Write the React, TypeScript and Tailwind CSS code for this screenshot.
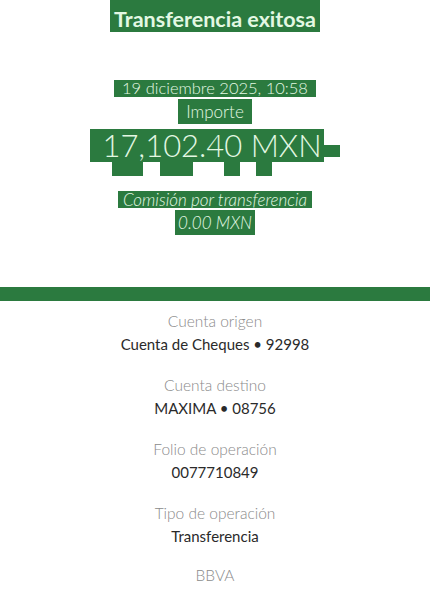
import React from "react";

const hl = "bg-[#2b7a3f] text-[#e3f8e3]";

const details = [
  { label: "Cuenta origen", value: "Cuenta de Cheques • 92998" },
  { label: "Cuenta destino", value: "MAXIMA • 08756" },
  { label: "Folio de operación", value: "0077710849" },
  { label: "Tipo de operación", value: "Transferencia" },
];

export default function App() {
  return (
    <div className="w-[430px] h-[597px] overflow-hidden bg-white font-['Lato','Noto_Sans',sans-serif]">
      {/* header */}
      <div className="flex flex-col items-center text-center">
        <span className={`${hl} px-[4px] pt-[8px] pb-[1px] text-[21.5px] font-bold leading-[23px]`}>
          Transferencia exitosa
        </span>

        <span className={`${hl} mt-[48px] px-[8px] text-[16.5px] font-light leading-[17px]`}>
          19 diciembre 2025, 10:58
        </span>
        <span className={`${hl} mt-[2px] py-[3px] px-[8px] text-[17px] font-light leading-[19px]`}>
          Importe
        </span>
        <div className="mt-[5px] flex items-end">
          <span className={`${hl} pl-[12px] pr-[2px] text-[31px] font-light leading-[33px]`}>
            17,102.40 MXN
          </span>
          <span className="mb-[5px] h-[12px] w-[16px] bg-[#2b7a3f]" />
        </div>
        <div className="flex h-[14px] w-[430px]">
          <span className="ml-[112px] w-[31px] bg-[#2b7a3f]" />
          <span className="ml-[17px] w-[33px] bg-[#2b7a3f]" />
          <span className="ml-[31px] w-[16px] bg-[#2b7a3f]" />
          <span className="ml-[16px] w-[16px] bg-[#2b7a3f]" />
        </div>

        <span className={`${hl} mt-[15px] px-[5px] text-[17px] italic font-light leading-[17px]`}>
          Comisión por transferencia
        </span>
        <span className={`${hl} mt-[2px] py-[2px] px-[3px] text-[17px] italic font-light leading-[21px]`}>
          0.00 MXN
        </span>
      </div>

      <div className="mt-[52px] h-[14px] w-full bg-[#2b7a3f]" />

      {/* details */}
      <div className="mt-[10px] flex flex-col items-center gap-[21px] text-center">
        {details.map((d) => (
          <div key={d.label} className="flex flex-col items-center">
            <span className="text-[15.5px] font-light leading-[20px] text-[#8a8a8a]">{d.label}</span>
            <span className="mt-[3px] text-[15px] leading-[20px] text-[#2a2a2a]">{d.value}</span>
          </div>
        ))}
        <span className="mt-[-2px] text-[15.5px] font-light leading-[20px] text-[#8a8a8a]">BBVA</span>
      </div>
    </div>
  );
}
